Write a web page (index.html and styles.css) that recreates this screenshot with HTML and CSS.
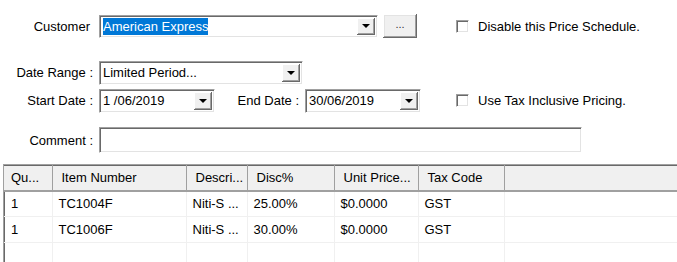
FILE: index.html
```html
<!DOCTYPE html>
<html lang="en">
<head>
    <meta charset="UTF-8">
    <title>Price Schedule</title>
    <link rel="stylesheet" href="styles.css">
</head>
<body>
    <div class="form">
        <div class="row row-customer">
            <div class="left">
                <span class="lbl">Customer</span>
                <div class="combo w-cust">
                    <span class="val"><span class="sel">American Express</span></span>
                    <span class="drop"><i class="tri"></i></span>
                </div>
                <button class="dots">...</button>
            </div>
            <label class="chk"><span class="box"></span>Disable this Price Schedule.</label>
        </div>
        <div class="row row-range">
            <div class="left">
                <span class="lbl">Date Range :</span>
                <div class="combo w-range">
                    <span class="val">Limited Period...</span>
                    <span class="drop"><i class="tri"></i></span>
                </div>
            </div>
        </div>
        <div class="row row-dates">
            <div class="left">
                <span class="lbl">Start Date :</span>
                <div class="combo w-date">
                    <span class="val">1 /06/2019</span>
                    <span class="drop"><i class="tri"></i></span>
                </div>
                <span class="lbl2">End Date :</span>
                <div class="combo w-date">
                    <span class="val">30/06/2019</span>
                    <span class="drop"><i class="tri"></i></span>
                </div>
            </div>
            <label class="chk"><span class="box"></span>Use Tax Inclusive Pricing.</label>
        </div>
        <div class="row row-comment">
            <span class="lbl">Comment :</span>
            <div class="text w-comment"></div>
        </div>
    </div>
    <div class="grid">
        <table>
            <colgroup>
                <col style="width:48px">
                <col style="width:134px">
                <col style="width:61px">
                <col style="width:87px">
                <col style="width:84px">
                <col style="width:86px">
                <col>
            </colgroup>
            <thead>
                <tr><th>Qu...</th><th>Item Number</th><th>Descri...</th><th>Disc%</th><th>Unit Price...</th><th>Tax Code</th><th></th></tr>
            </thead>
            <tbody>
                <tr><td>1</td><td>TC1004F</td><td>Niti-S ...</td><td>25.00%</td><td>$0.0000</td><td>GST</td><td></td></tr>
                <tr><td>1</td><td>TC1006F</td><td>Niti-S ...</td><td>30.00%</td><td>$0.0000</td><td>GST</td><td></td></tr>
                <tr><td></td><td></td><td></td><td></td><td></td><td></td><td></td></tr>
            </tbody>
        </table>
    </div>
</body>
</html>
```

FILE: styles.css
```css
body{margin:0;background:#fff;font-family:"Liberation Sans",Arial,sans-serif;font-size:13px;color:#000;overflow:hidden;width:677px;height:262px}
.form{padding-top:14px}
.row{display:flex;align-items:center}
.row-customer{height:24px}
.row-range{height:25px;margin-top:22px}
.row-dates{height:25px;margin-top:3px}
.row-comment{height:26px;margin-top:14px}
.left{display:flex;align-items:center;width:456px;flex:none}
.lbl{width:93px;flex:none;text-align:right;margin-right:6px;white-space:nowrap}
.row-customer .lbl{width:90px;margin-right:9px}
.lbl2{width:84px;text-align:right;margin-right:6px;white-space:nowrap}
.combo,.text{box-sizing:border-box;flex:none;display:flex;align-items:stretch;background:#fff;border-top:1px solid #a0a0a0;border-left:1px solid #a0a0a0;border-right:1px solid #fff;border-bottom:1px solid #fff;box-shadow:inset 1px 1px 0 #696969,inset -1px -1px 0 #e3e3e3}
.w-cust{width:279px;height:23px}
.w-range{width:204px;height:24px}
.w-date{width:116px;height:24px}
.w-comment{width:483px;height:26px}
.val{flex:1;display:flex;align-items:center;padding-left:3px;white-space:nowrap;overflow:hidden}
.sel{background:#0078d7;color:#fff;padding:1px 0 1px;line-height:15px}
.drop{width:18px;margin:2px 2px 2px 0;background:#f0f0f0;display:flex;align-items:center;justify-content:center;box-shadow:inset -1px -1px 0 #696969,inset 1px 1px 0 #fff,inset -2px -2px 0 #a0a0a0}
.tri{width:0;height:0;border-left:4px solid transparent;border-right:4px solid transparent;border-top:4px solid #000}
.dots{box-sizing:border-box;width:34px;height:24px;margin-left:5px;padding:0 0 4px;background:#f0f0f0;border:none;font:inherit;font-size:11px;color:#333;box-shadow:inset -1px -1px 0 #696969,inset 1px 1px 0 #fff,inset -2px -2px 0 #a0a0a0,inset 2px 2px 0 #e3e3e3}
.chk{display:flex;align-items:center;white-space:nowrap}
.box{box-sizing:border-box;width:13px;height:13px;margin-right:9px;background:#fff;border-top:1px solid #a0a0a0;border-left:1px solid #a0a0a0;border-right:1px solid #fff;border-bottom:1px solid #fff;box-shadow:inset 1px 1px 0 #696969,inset -1px -1px 0 #e3e3e3}
.grid{margin:11px 0 0 3px;border-top:1px solid #a0a0a0;border-left:1px solid #a0a0a0;box-shadow:inset 1px 1px 0 #696969}
table{border-collapse:collapse;table-layout:fixed;width:674px}
th{height:25px;box-sizing:border-box;background:#f0f0f0;font-weight:normal;text-align:left;padding:0 0 0 9px;border-right:1px solid #a0a0a0;border-bottom:2px solid #a0a0a0;border-top:1px solid #696969;white-space:nowrap;overflow:hidden}
td{height:26px;box-sizing:border-box;padding:0 0 0 6px;border-right:1px solid #f0f0f0;border-bottom:1px solid #f0f0f0;white-space:nowrap;overflow:hidden}
th:first-child,td:first-child{padding-left:7px}
```
